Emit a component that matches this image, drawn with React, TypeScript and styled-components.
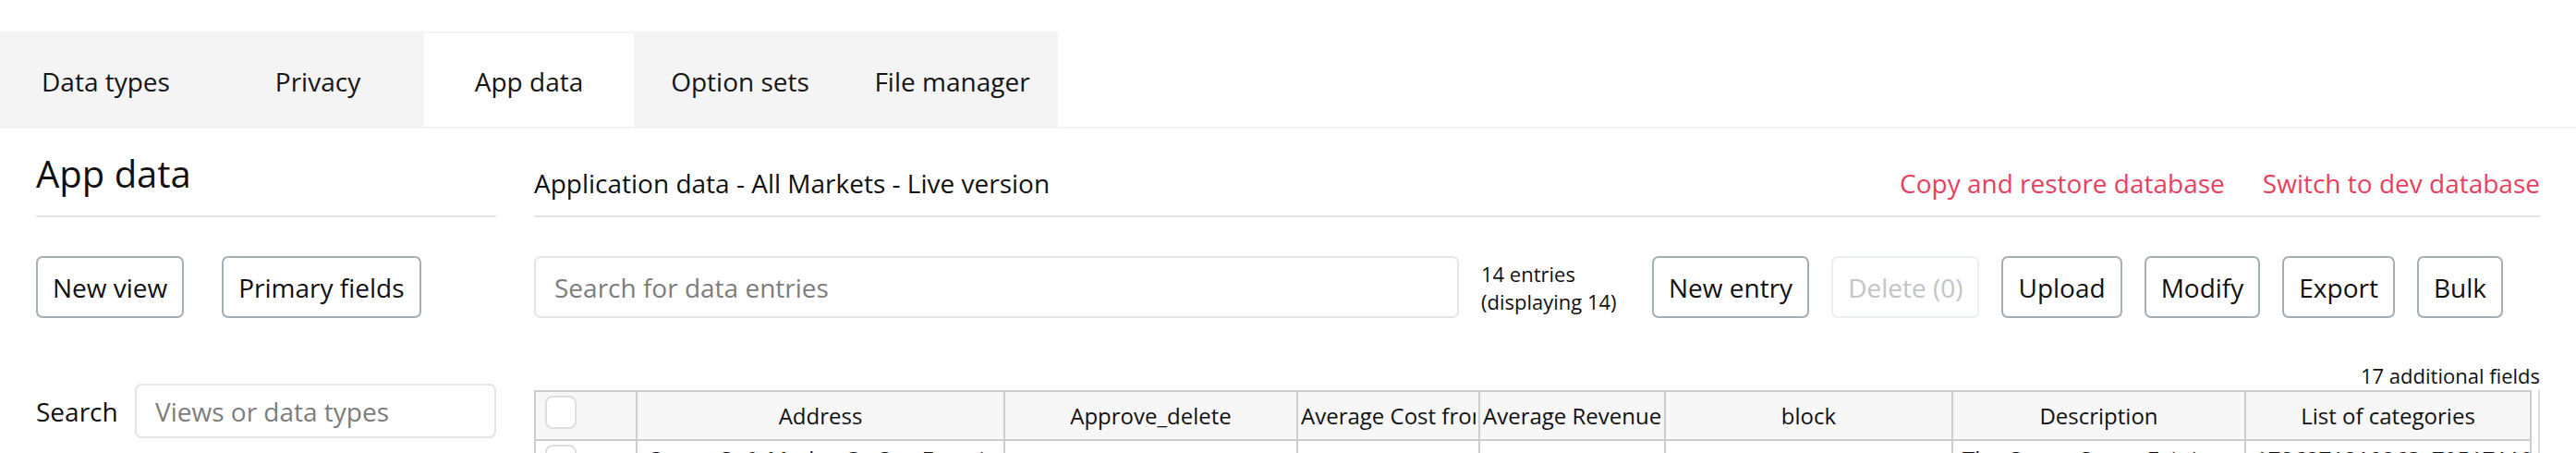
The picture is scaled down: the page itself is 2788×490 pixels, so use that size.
import React from 'react';
import styled, { createGlobalStyle } from 'styled-components';

const GlobalStyle = createGlobalStyle`
  html, body {
    margin: 0;
    padding: 0;
    background: #fff;
    font-family: 'Open Sans', 'Noto Sans', sans-serif;
    color: #111;
  }
  * { box-sizing: border-box; }
`;

const Page = styled.div`
  width: 2788px;
  height: 490px;
  overflow: hidden;
  padding-top: 34px;
`;

const TabBar = styled.div`
  display: flex;
  border-bottom: 2px solid #f2f2f2;
`;

const TabGroup = styled.div`
  display: flex;
  background: #f4f4f4;
  padding-top: 2px;
`;

const Tab = styled.div<{ $active?: boolean; $width: number }>`
  width: ${(p) => p.$width}px;
  height: 101px;
  display: flex;
  align-items: center;
  justify-content: center;
  padding-top: 3px;
  font-size: 28px;
  background: ${(p) => (p.$active ? '#fff' : 'transparent')};
  color: #151515;
`;

const Main = styled.div`
  display: flex;
  gap: 41px;
  padding: 0 39px;
`;

const LeftCol = styled.div`
  width: 498px;
  flex-shrink: 0;
`;

const RightCol = styled.div`
  flex: 1;
  min-width: 0;
`;

const Heading = styled.h1`
  margin: 0;
  height: 96px;
  display: flex;
  align-items: center;
  padding-top: 3px;
  font-size: 40px;
  font-weight: 400;
  border-bottom: 2px solid #e4e4e4;
`;

const TitleRow = styled.div`
  height: 96px;
  display: flex;
  align-items: center;
  padding-top: 24px;
  border-bottom: 2px solid #e4e4e4;
`;

const Title = styled.div`
  font-size: 28px;
  flex: 1;
`;

const Links = styled.div`
  display: flex;
  gap: 41px;
`;

const RedLink = styled.a`
  color: #e8405f;
  font-size: 28px;
  text-decoration: none;
`;

const ButtonRow = styled.div`
  display: flex;
  align-items: center;
  gap: 41px;
  margin-top: 42px;
`;

const Toolbar = styled.div`
  display: flex;
  align-items: center;
  gap: 24px;
  margin-top: 42px;
`;

const Button = styled.button<{ $disabled?: boolean }>`
  height: 67px;
  padding: 0 16px;
  font-family: inherit;
  font-size: 28px;
  background: #fff;
  color: ${(p) => (p.$disabled ? '#c4c4c4' : '#111')};
  border: 2px solid ${(p) => (p.$disabled ? '#eceff1' : '#a3aeb5')};
  border-radius: 7px;
  white-space: nowrap;
`;

const SearchInput = styled.input<{ $width: number; $height: number }>`
  width: ${(p) => p.$width}px;
  height: ${(p) => p.$height}px;
  border: 2px solid #e5e5e5;
  border-radius: 7px;
  padding: 0 20px;
  font-family: inherit;
  font-size: 28px;
  color: #111;
  outline: none;
  &::placeholder {
    color: #7d7d7d;
  }
`;

const Count = styled.div`
  font-size: 22px;
  line-height: 30px;
  width: 161px;
`;

const SearchRow = styled.div`
  display: flex;
  align-items: center;
  gap: 20px;
  margin-top: 71px;
`;

const Label = styled.span`
  font-size: 28px;
  width: 87px;
`;

const Extra = styled.div`
  margin-top: 47px;
  text-align: right;
  font-size: 22px;
  line-height: 30px;
  height: 30px;
`;

const TableWrap = styled.div`
  margin-top: 1px;
  border-right: 2px solid #dcdcdc;
  height: 100px;
`;

const Table = styled.table`
  border-collapse: collapse;
  table-layout: fixed;
  width: 2160px;
`;

const Th = styled.th<{ $first?: boolean }>`
  height: 53px;
  background: #f7f7f7;
  border: 2px solid #cdcdcd;
  font-size: 24px;
  font-weight: 400;
  text-align: ${(p) => (p.$first ? 'left' : 'center')};
  padding: ${(p) => (p.$first ? '0 10px' : '0 3px')};
`;

const HeadText = styled.div`
  white-space: nowrap;
  overflow: hidden;
`;

const Td = styled.td`
  border: 2px solid #cdcdcd;
  border-bottom: none;
  font-size: 24px;
  line-height: 30px;
  white-space: nowrap;
  overflow: hidden;
  vertical-align: top;
  padding: 5px 10px 0;
  height: 60px;
`;

const CheckCell = styled.div`
  display: flex;
  align-items: flex-start;
  gap: 22px;
  margin-top: -1px;
`;

const Check = styled.span`
  display: inline-block;
  width: 34px;
  height: 36px;
  border: 2px solid #dedede;
  border-radius: 8px;
  background: #fff;
  flex-shrink: 0;
`;

const columns = [
  { name: '', width: 110 },
  { name: 'Address', width: 398 },
  { name: 'Approve_delete', width: 317 },
  { name: 'Average Cost from Markets', width: 197 },
  { name: 'Average Revenue per Market', width: 201 },
  { name: 'block', width: 311 },
  { name: 'Description', width: 317 },
  { name: 'List of categories', width: 309 },
];

const tabs = [
  { label: 'Data types', width: 229 },
  { label: 'Privacy', width: 230 },
  { label: 'App data', width: 227, active: true },
  { label: 'Option sets', width: 230 },
  { label: 'File manager', width: 229 },
];

const row = ['Castro St & Market St, San Francisco', '', '', '', '', 'The Castro Street Fair is an annual', '1726271210263x795171192'];

export default function App() {
  return (
    <Page>
      <GlobalStyle />
      <TabBar>
        <TabGroup>
          {tabs.map((t) => (
            <Tab key={t.label} $active={t.active} $width={t.width}>
              {t.label}
            </Tab>
          ))}
        </TabGroup>
      </TabBar>
      <Main>
        <LeftCol>
          <Heading>App data</Heading>
          <ButtonRow>
            <Button>New view</Button>
            <Button>Primary fields</Button>
          </ButtonRow>
          <SearchRow>
            <Label>Search</Label>
            <SearchInput $width={391} $height={59} placeholder="Views or data types" />
          </SearchRow>
        </LeftCol>
        <RightCol>
          <TitleRow>
            <Title>Application data - All Markets - Live version</Title>
            <Links>
              <RedLink>Copy and restore database</RedLink>
              <RedLink>Switch to dev database</RedLink>
            </Links>
          </TitleRow>
          <Toolbar>
            <SearchInput $width={1001} $height={67} placeholder="Search for data entries" />
            <Count>
              14 entries
              <br />
              (displaying 14)
            </Count>
            <Button>New entry</Button>
            <Button $disabled>Delete (0)</Button>
            <Button>Upload</Button>
            <Button>Modify</Button>
            <Button>Export</Button>
            <Button>Bulk</Button>
          </Toolbar>
          <Extra>17 additional fields</Extra>
          <TableWrap>
            <Table>
              <colgroup>
                {columns.map((c, i) => (
                  <col key={i} style={{ width: c.width }} />
                ))}
              </colgroup>
              <thead>
                <tr>
                  {columns.map((c, i) => (
                    <Th key={i} $first={i === 0}>
                      {i === 0 ? <Check /> : <HeadText>{c.name}</HeadText>}
                    </Th>
                  ))}
                </tr>
              </thead>
              <tbody>
                <tr>
                  <Td>
                    <CheckCell>
                      <Check />
                      <svg width="22" height="22" viewBox="0 0 22 22" style={{ marginTop: 8 }}>
                        <path d="M11 3 L19 13 L3 13 Z" fill="#b8b8b8" />
                      </svg>
                    </CheckCell>
                  </Td>
                  {row.map((v, i) => (
                    <Td key={i}>{v}</Td>
                  ))}
                </tr>
              </tbody>
            </Table>
          </TableWrap>
        </RightCol>
      </Main>
    </Page>
  );
}
